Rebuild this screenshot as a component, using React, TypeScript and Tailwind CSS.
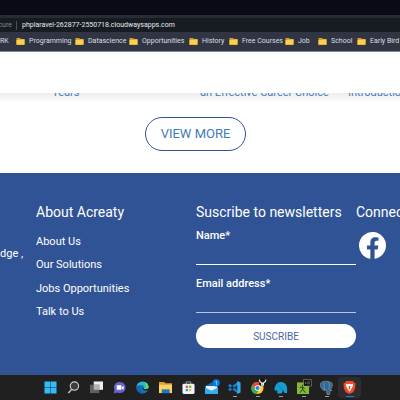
import React from "react";

function Folder() {
  return (
    <svg viewBox="0 0 18 14" className="h-[7px] w-[9px] shrink-0" aria-hidden="true">
      <path d="M1 0h7l2 2h7v12H1z" fill="#d9a02a" />
      <path d="M1 4h7l2-1h7v10H1z" fill="#fbd04e" />
    </svg>
  );
}

const bookmarks = ["Programming", "Datascience", "Opportunities", "History", "Free Courses", "Job", "School", "Early Bird"];
const links = ["About Us", "Our Solutions", "Jobs Opportunities", "Talk to Us"];

function Browser() {
  return (
    <div className="whitespace-nowrap text-[7px] text-[#dcdee4]">
      <div className="h-[15px] bg-[#0a0a14]" />
      <div className="h-[3px] bg-[#272a37]" />
      <div className="flex h-[14px] items-center bg-[#171b22]">
        <div className="flex w-[17px] justify-end border-r border-[#4b4f59] pr-1 leading-[9px] text-[#858990]">Secure</div>
        <div className="pl-[5px] text-[#e8e9ed]">phplaravel-262877-2550718.cloudwaysapps.com</div>
      </div>
      <nav className="flex h-[20px] items-center border-b border-[#858792] bg-[#313543]">
        <div className="grid grid-cols-[16px_59px_54px_60px_40px_56px_33px_39px_43px] items-center">
          <a href="#work">RK</a>
          {bookmarks.map((b) => (
            <a key={b} href="#bookmark" className="flex items-center gap-1">
              <Folder />
              {b}
            </a>
          ))}
        </div>
      </nav>
    </div>
  );
}

function Field({ id, label, line }: { id: string; label: string; line: string }) {
  return (
    <div className="h-12">
      <label htmlFor={id} className="block text-[11px] font-medium leading-4">{label}</label>
      <input id={id} className={`block h-[21px] w-full border-b bg-transparent text-[11px] outline-none ${line}`} />
    </div>
  );
}

function Footer() {
  return (
    <footer className="grid h-[202px] grid-cols-[36px_160px_160px_auto] overflow-hidden whitespace-nowrap bg-[#305396] pt-[29px] text-white">
      <p className="pt-11 text-[11px] leading-4">dge ,</p>
      <section>
        <h2 className="text-sm leading-5">About Acreaty</h2>
        <ul className="mt-2 grid h-[94px] grid-rows-4 items-center text-[11px]">
          {links.map((l) => (
            <li key={l}>
              <a href="#about">{l}</a>
            </li>
          ))}
        </ul>
      </section>
      <form>
        <h2 className="mb-[6px] text-sm leading-5">Suscribe to newsletters</h2>
        <Field id="name" label="Name*" line="border-white" />
        <Field id="email" label="Email address*" line="border-[#b9c6df]" />
        <button type="button" className="block h-6 w-full rounded-full bg-white text-[10px] text-[#4a68a5]">SUSCRIBE</button>
      </form>
      <section>
        <h2 className="text-sm leading-5">Connect</h2>
        <a href="#facebook" aria-label="Facebook" className="ml-[3px] mt-[10px] block size-[27px]">
          <svg viewBox="0 0 24 24" className="size-full" fill="white">
            <path d="M24 12a12 12 0 1 0-13.9 11.85v-8.38H7.05V12h3.05V9.36c0-3 1.79-4.67 4.53-4.67 1.31 0 2.68.24 2.68.24v2.95h-1.51c-1.49 0-1.95.93-1.95 1.87V12h3.32l-.53 3.47h-2.79v8.38A12 12 0 0 0 24 12z" />
          </svg>
        </a>
      </section>
    </footer>
  );
}

const icons: { name: string; art: React.ReactNode; state?: string }[] = [
  {
    name: "Start",
    art: <path d="M1 1h12.5v12.5H1zM14.5 1H27v12.5H14.5zM1 14.5h12.5V27H1zM14.5 14.5H27V27H14.5z" fill="#33bdf8" />,
  },
  {
    name: "Search",
    art: (
      <g stroke="#cfcfcf" fill="#3d3d3d">
        <circle cx="16" cy="11" r="9" strokeWidth="2.5" />
        <path d="M10 18l-7 8" strokeWidth="3" />
      </g>
    ),
  },
  {
    name: "Task view",
    art: (
      <g>
        <path d="M8 1h20v18H8z" fill="#eee" />
        <path d="M0 8h20v18H0z" fill="#606060" />
        <path d="M8 8h12v11H8z" fill="#b2b2b2" />
      </g>
    ),
  },
  {
    name: "Chat",
    art: (
      <g>
        <path d="M15 2a12 12 0 0 1 0 24c-2 0-4 0-6-1l-7 2 1-8A12 12 0 0 1 15 2z" fill="#6c62cf" />
        <path d="M8 9h10v10H8zM19 13l4-3v9l-4-3z" fill="white" />
      </g>
    ),
  },
  {
    name: "Edge",
    art: (
      <g>
        <circle cx="14" cy="14" r="13" fill="#0b7fc4" />
        <path d="M1 13C3-2 26-2 27 13c0 6-8 7-10 4 2-3 0-8-5-8-4 0-9 2-11 4z" fill="#2cb9c5" />
        <path d="M18 2c6 2 9 6 9 11s-6 6-9 5c4-4 4-11 0-16z" fill="#67d86a" />
        <path d="M10 13c-2 6 3 12 9 13C9 30 0 22 1 14c2-5 9-6 12-3z" fill="#1268b3" />
        <path d="M13 14c0 6 6 8 11 6l4 2v-6l-10 2c-2-1-1-3-5-4z" fill="#202020" />
      </g>
    ),
  },
  {
    name: "Files",
    art: (
      <g>
        <path d="M0 2h11l3 3h14v20H0z" fill="#e2a126" />
        <path d="M0 8h28v18H0z" fill="#ffd261" />
        <path d="M6 18h17v8H6z" fill="#1579c4" />
      </g>
    ),
  },
  {
    name: "Store",
    art: (
      <g>
        <path d="M9 8V2h10v6" fill="none" stroke="#88a3b5" strokeWidth="2" />
        <rect x="1" y="6" width="26" height="22" rx="3" fill="#eef4f7" />
        <path d="M8 10h5v5H8z" fill="#ed5636" />
        <path d="M15 10h5v5h-5z" fill="#77b93d" />
        <path d="M8 17h5v5H8z" fill="#219bdd" />
        <path d="M15 17h5v5h-5z" fill="#ffbd2b" />
      </g>
    ),
  },
  {
    name: "Mail",
    art: (
      <g>
        <path d="M0 11l14-8 14 8v17H0z" fill="#1367aa" />
        <path d="M2 11h24v8l-12 5-12-5z" fill="#e9f5fc" />
        <path d="M0 14l14 7 14-7v14H0z" fill="#31aef0" />
        <circle cx="24" cy="4" r="8" fill="#087ce3" />
        <path d="M22 2l3-2v9" stroke="#b8ddff" strokeWidth="1.5" fill="none" />
      </g>
    ),
  },
  {
    name: "Code",
    state: "h-px w-1 bg-[#a0a0a0]",
    art: (
      <g>
        <path d="M1 9l3-3 17 15v6L1 12zM1 19l3 3L22 8V1L1 17z" fill="#1680ce" />
        <path d="M20 0l7 3v22l-7 3V8z" fill="#31a8f4" />
      </g>
    ),
  },
  {
    name: "Chrome",
    state: "h-px w-1 bg-[#a0a0a0]",
    art: (
      <g>
        <circle cx="14" cy="15" r="13" fill="#f9cc35" />
        <path d="M3 8A13 13 0 0 1 26 9H14l-5 9z" fill="#e74535" />
        <path d="M3 8l7 11 6 2-4 7C1 27-2 16 3 8z" fill="#3aaa54" />
        <circle cx="14" cy="15" r="6" fill="white" />
        <circle cx="14" cy="15" r="4.5" fill="#3b7ee8" />
        <circle cx="25" cy="3" r="8" fill="#171717" />
        <path d="M18-3c0 7 4 5 7 8 3-3 7-1 7-8M23 4v5h4V4" stroke="#eee" strokeWidth="2.5" fill="none" />
      </g>
    ),
  },
  {
    name: "Elephant",
    state: "h-px w-1 bg-[#a0a0a0]",
    art: (
      <g>
        <path d="M2 13C4 3 15-1 23 5c6 5 6 14 5 21h-6l-2-6-4 7H7v-7c-6 3-7-1-5-7z" fill="#169bd5" />
        <path d="M11 10c4 7 6 5 7 10" stroke="#0878ae" strokeWidth="1.5" fill="none" />
      </g>
    ),
  },
  {
    name: "Editor",
    state: "h-px w-1 bg-[#a0a0a0]",
    art: (
      <g>
        <path d="M0 3h26v25H0z" fill="#83b735" />
        <path d="M12 8v4m-6 2l6-1 4 4m-4-4v5l-5 7m5-7l6 7" stroke="#213111" strokeWidth="2" fill="none" />
        <path d="M14-3h17v14H14z" fill="#0e0e0e" stroke="#bbb" />
        <path d="M17 2l3 2-3 2m5-4h6m-6 4h6" stroke="#ddd" fill="none" />
      </g>
    ),
  },
  {
    name: "PostgreSQL",
    state: "h-px w-1 bg-[#a0a0a0]",
    art: (
      <g stroke="#a9bdca" strokeWidth="1">
        <path d="M3 3c6-4 17-3 22 1 4 4 0 12-3 15l4 1-5 2v7h-6l-1-10-5 2C2 17-2 7 3 3z" fill="#336791" />
        <path d="M10 4c-2 5-2 9 0 15m8-16c3 5 2 9 1 15" fill="none" />
      </g>
    ),
  },
  {
    name: "Brave",
    state: "h-px w-2 bg-[#1586e8]",
    art: (
      <g>
        <path d="M7 0h14l3 4 3 1-1 11-4 8-8 4-8-4-4-8L1 5l3-1z" fill="#f14827" />
        <path d="M6 6l5 1 3-1 3 1 5-1-1 6-4 7-3 4-3-4-4-7zM11 12l2 2-1 2 2 3 2-3-1-2 2-2-3-1z" fill="white" fillRule="evenodd" />
      </g>
    ),
  },
];

function Taskbar() {
  return (
    <nav aria-label="Taskbar" className="flex h-[25px] items-center justify-center bg-[#202020]">
      {icons.map((icon) => (
        <button
          key={icon.name}
          aria-label={icon.name}
          className={`flex h-[21px] w-[23px] flex-col items-center pt-1 ${icon.name === "Brave" ? "rounded-sm bg-[#2d2d2d]" : ""}`}
        >
          <svg viewBox="0 0 28 28" className="size-[13px] overflow-visible">{icon.art}</svg>
          <span className={`mt-[2px] ${icon.state ?? "h-px"}`} />
        </button>
      ))}
    </nav>
  );
}

export default function App() {
  return (
    <div className="overflow-hidden bg-white font-['Roboto',sans-serif]">
      <Browser />
      <header className="h-[41px] bg-white" />
      <div className="flex h-[10px] items-start overflow-hidden bg-gradient-to-b from-[#ededed] to-white">
        <div className="-mt-2 grid grid-cols-[148px_148px_148px] whitespace-nowrap pl-[52px] text-[11px] leading-4 text-[#3f7cb7]">
          <a href="#years">Years</a>
          <a href="#career">an Effective Career Choice</a>
          <a href="#intro">Introduction</a>
        </div>
      </div>
      <main className="flex h-[70px] justify-center pr-[9px] pt-[14px]">
        <button className="h-[34px] w-[101px] rounded-full border border-[#305396] text-[13px] text-[#3f7cb7]">VIEW MORE</button>
      </main>
      <Footer />
      <Taskbar />
    </div>
  );
}
